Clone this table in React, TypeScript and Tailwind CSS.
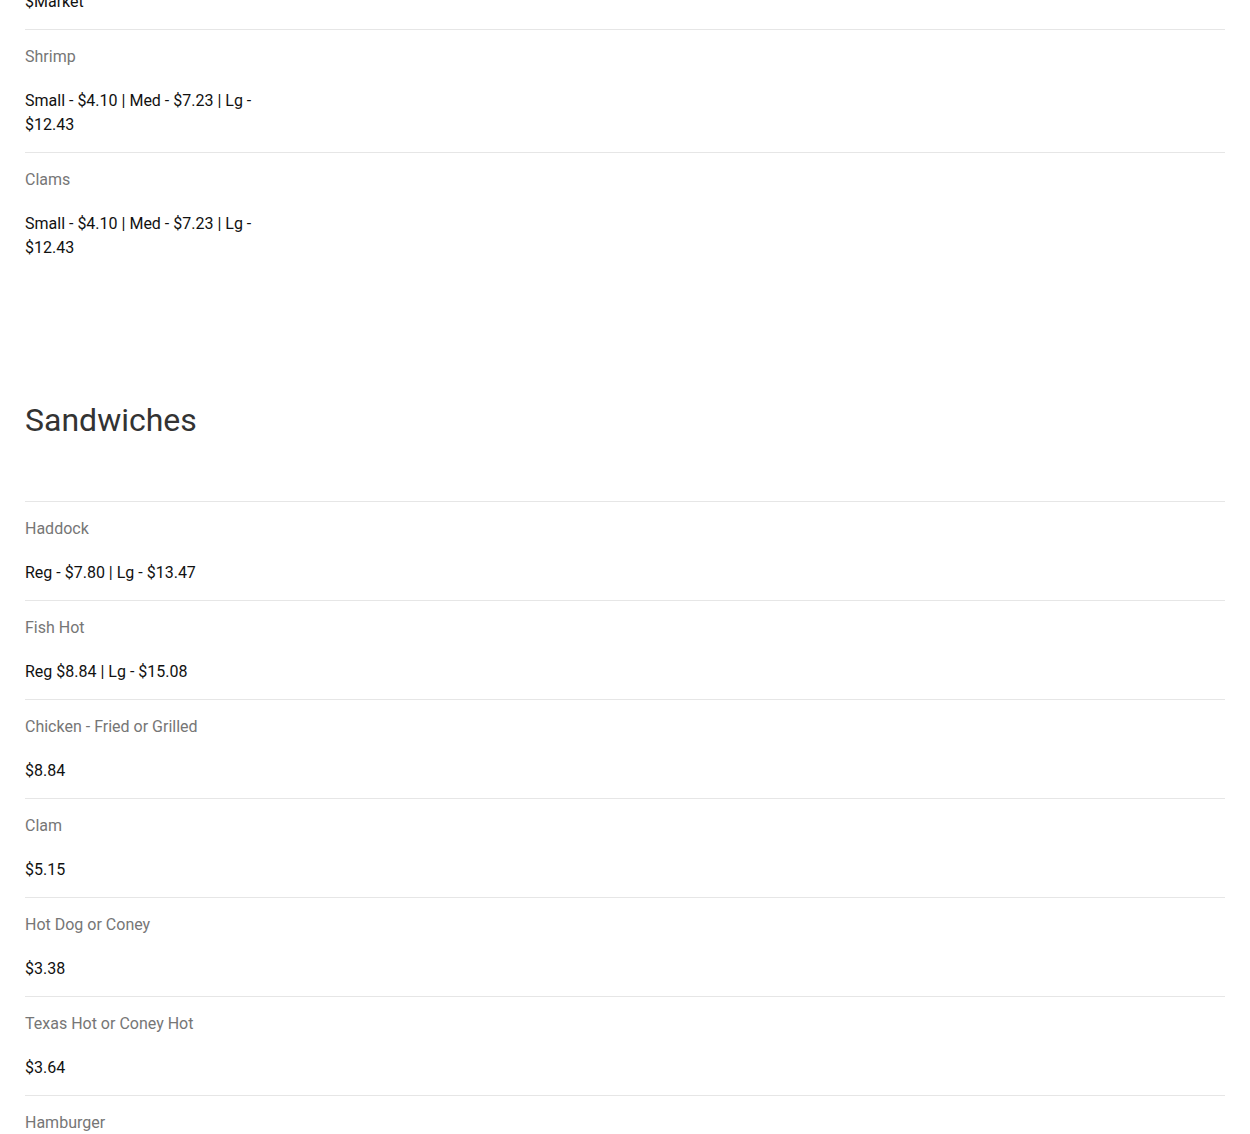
import React from 'react';

interface MenuItem {
  name: string;
  price: string;
}

const SEAFOOD: MenuItem[] = [
  { name: 'Shrimp', price: 'Small - $4.10 | Med - $7.23 | Lg - $12.43' },
  { name: 'Clams', price: 'Small - $4.10 | Med - $7.23 | Lg - $12.43' },
];

const SANDWICHES: MenuItem[] = [
  { name: 'Haddock', price: 'Reg - $7.80 | Lg - $13.47' },
  { name: 'Fish Hot', price: 'Reg $8.84 | Lg - $15.08' },
  { name: 'Chicken - Fried or Grilled', price: '$8.84' },
  { name: 'Clam', price: '$5.15' },
  { name: 'Hot Dog or Coney', price: '$3.38' },
  { name: 'Texas Hot or Coney Hot', price: '$3.64' },
  { name: 'Hamburger', price: '$4.16' },
];

const MenuRow = ({ item }: { item: MenuItem }) => (
  <div className="border-t border-[#e6e6e6] pt-[15px] pb-[15px]">
    <p className="text-base leading-6 text-[#767676]">{item.name}</p>
    <p className="mt-[20px] w-[260px] text-base leading-6 text-[#111]">{item.price}</p>
  </div>
);

export default function App() {
  return (
    <div className="min-h-screen bg-white px-[25px] font-['Roboto',sans-serif] overflow-hidden">
      <div className="-mt-[10px]">
        <p className="pb-[15px] text-base leading-6 text-[#111]">$Market</p>
        {SEAFOOD.map(item => (
          <MenuRow key={item.name} item={item} />
        ))}
      </div>

      <h2 className="mt-[125px] mb-[61px] text-[32px] leading-10 font-normal text-[#333]">Sandwiches</h2>

      <div>
        {SANDWICHES.map(item => (
          <MenuRow key={item.name} item={item} />
        ))}
      </div>
    </div>
  );
}
